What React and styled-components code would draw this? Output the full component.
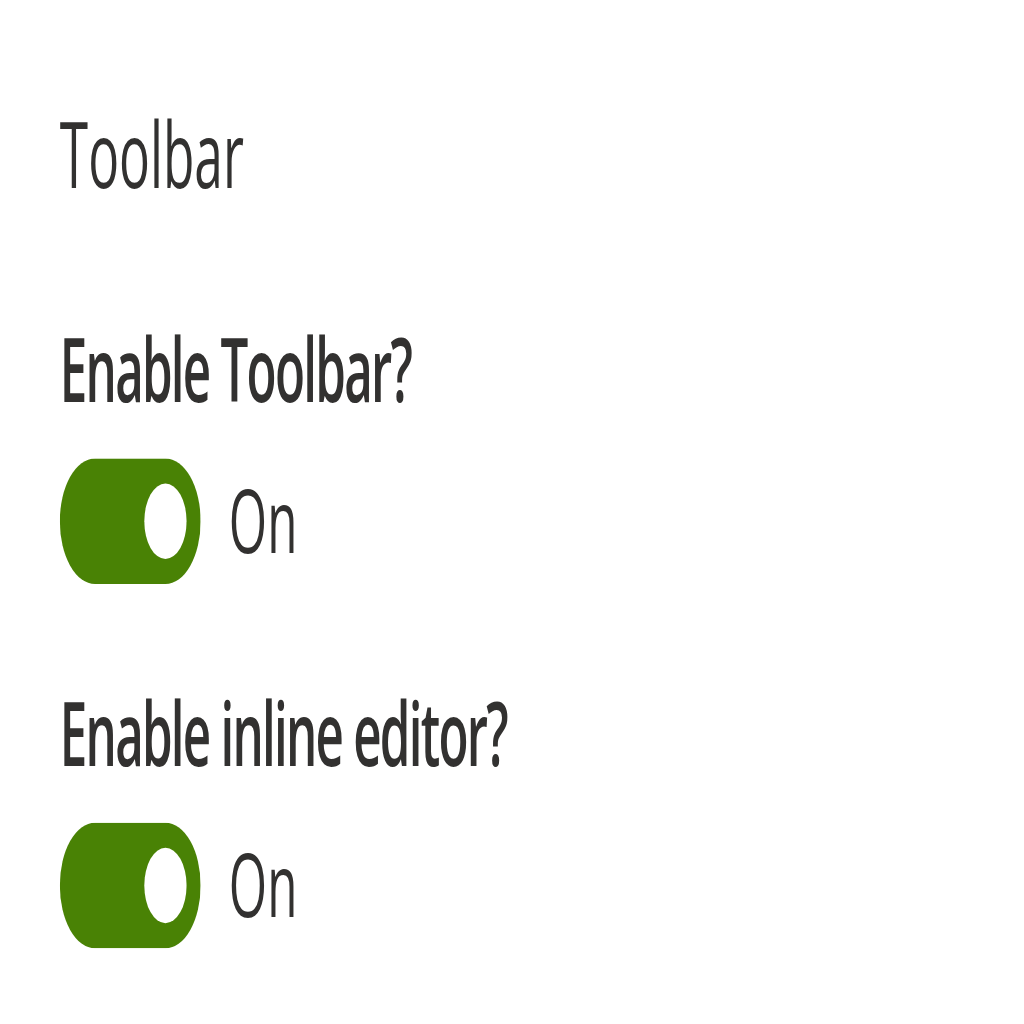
import React from "react";
import styled, { createGlobalStyle } from "styled-components";

const GlobalStyles = createGlobalStyle`
  body {
    margin: 0;
    padding: 0;
    background: #ffffff;
  }
`;

const Frame = styled.div`
  width: 1024px;
  height: 1024px;
  overflow: hidden;
  background: #ffffff;
`;

// the reference is a small property pane stretched to 1024x1024,
// so the pane is laid out at its natural size and scaled up unevenly
const Stretch = styled.div`
  width: 291px;
  height: 163px;
  transform: scale(3.52, 6.28);
  transform-origin: 0 0;
`;

const Pane = styled.div`
  padding: 14px 17px 0;
  font-family: "Open Sans", "Noto Sans", sans-serif;
  color: #323130;
`;

const GroupHeader = styled.div`
  font-size: 14.6px;
  font-weight: 400;
  line-height: 20px;
  margin-bottom: 9.5px;
`;

const Field = styled.div`
  margin-bottom: 8.4px;
`;

const Label = styled.label`
  display: block;
  font-size: 14px;
  font-weight: 560;
  letter-spacing: -0.5px;
  line-height: 20px;
  padding: 5px 0 4.5px;
`;

const ToggleRow = styled.div`
  display: flex;
  align-items: center;
`;

const Pill = styled.button`
  box-sizing: border-box;
  width: 40px;
  height: 20.2px;
  border-radius: 10px;
  border: 1px solid ${p => (p.$on ? "transparent" : "#605e5c")};
  background: ${p => (p.$on ? "#498205" : "#ffffff")};
  padding: 0 3px;
  margin: 0;
  display: flex;
  align-items: center;
  justify-content: ${p => (p.$on ? "flex-end" : "flex-start")};
  cursor: pointer;
`;

const Thumb = styled.span`
  width: 12px;
  height: 12px;
  border-radius: 50%;
  background: ${p => (p.$on ? "#ffffff" : "#605e5c")};
`;

const StateText = styled.span`
  font-size: 14px;
  font-weight: 400;
  line-height: 20px;
  margin-left: 8px;
`;

const Toggle = ({ label, on }) => (
  <Field>
    <Label>{label}</Label>
    <ToggleRow>
      <Pill $on={on} role="switch" aria-checked={on}>
        <Thumb $on={on} />
      </Pill>
      <StateText>{on ? "On" : "Off"}</StateText>
    </ToggleRow>
  </Field>
);

const App = () => (
  <Frame>
    <GlobalStyles />
    <Stretch>
      <Pane>
        <GroupHeader>Toolbar</GroupHeader>
        <Toggle label="Enable Toolbar?" on />
        <Toggle label="Enable inline editor?" on />
      </Pane>
    </Stretch>
  </Frame>
);

export default App;
